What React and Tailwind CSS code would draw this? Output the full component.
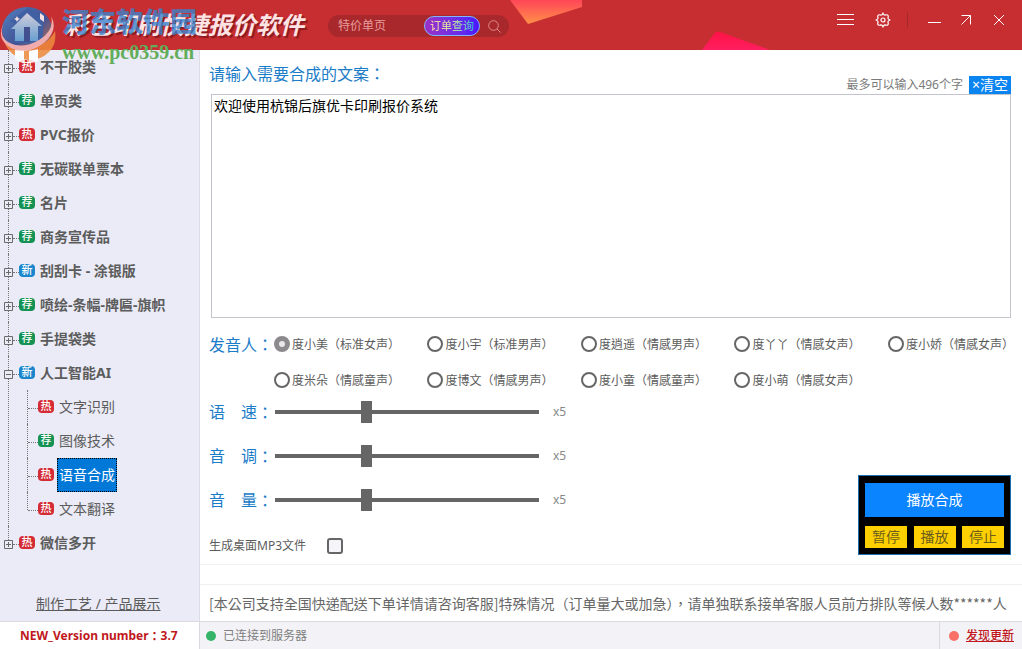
import clsx from 'clsx'
import { useState } from 'react'

const MENU = [
  { tag: 'hot', label: '不干胶类' },
  { tag: 'rec', label: '单页类' },
  { tag: 'hot', label: 'PVC报价' },
  { tag: 'rec', label: '无碳联单票本' },
  { tag: 'rec', label: '名片' },
  { tag: 'rec', label: '商务宣传品' },
  { tag: 'new', label: '刮刮卡 - 涂银版' },
  { tag: 'rec', label: '喷绘-条幅-牌匾-旗帜' },
  { tag: 'rec', label: '手提袋类' },
  {
    tag: 'new',
    label: '人工智能AI',
    children: [
      { tag: 'hot', label: '文字识别' },
      { tag: 'rec', label: '图像技术' },
      { tag: 'hot', label: '语音合成' },
      { tag: 'hot', label: '文本翻译' },
    ],
  },
  { tag: 'hot', label: '微信多开' },
]

const TAGS = {
  hot: { text: '热', className: 'bg-[#d42b35]' },
  rec: { text: '荐', className: 'bg-[#149253]' },
  new: { text: '新', className: 'bg-[#1b86cb]' },
}

const VOICES = [
  '度小美（标准女声）',
  '度小宇（标准男声）',
  '度逍遥（情感男声）',
  '度丫丫（情感女声）',
  '度小娇（情感女声）',
  '度米朵（情感童声）',
  '度博文（情感男声）',
  '度小童（情感童声）',
  '度小萌（情感女声）',
]

const SLIDERS = [
  { id: 'speed', chars: ['语', '速'] },
  { id: 'pitch', chars: ['音', '调'] },
  { id: 'volume', chars: ['音', '量'] },
]

export default function App() {
  return (
    <div className="relative flex flex-col min-h-screen bg-white text-[#5c5c5c] text-sm font-['Noto_Sans','Noto_Sans_CJK_SC',sans-serif]">
      <Header />
      <div className="flex flex-1">
        <Sidebar />
        <Main />
      </div>
      <Footer />
      <Watermark />
    </div>
  )
}

const Header = () => (
  <header className="relative flex items-center h-[50px] pl-16 pr-[17px] bg-[#c62e31]">
    <Decoration />
    <h1 className="relative w-[264px] whitespace-nowrap text-2xl font-bold italic text-[#fde3e3] [text-shadow:2px_2px_1px_#8c1a20]">
      彩色印刷快捷报价软件
    </h1>
    <div className="relative flex items-center h-[22px] mt-0.5 pl-2.5 pr-2 rounded-full bg-[#a8282b]">
      <input
        aria-label="搜索"
        defaultValue="特价单页"
        className="w-[86px] bg-transparent text-xs text-[#e79c9c] outline-none"
      />
      <button className="flex items-center justify-center w-14 h-5 rounded-full border border-[#7fb6ff] bg-linear-to-r from-[#9a2fc4] to-[#4a12ff]">
        <span className="whitespace-nowrap bg-linear-to-r from-[#ffd0b0] via-[#c8d8a0] to-[#20b8d0] bg-clip-text text-[11px] leading-4 font-medium text-transparent">
          订单查询
        </span>
      </button>
      <button aria-label="查询" className="ml-2">
        <svg
          viewBox="0 0 13 13"
          className="w-[13px] h-[13px] fill-none stroke-[#e08b8b]">
          <circle cx="5.5" cy="5.5" r="4.8" />
          <path d="M9 9l3.5 3.5" />
        </svg>
      </button>
    </div>
    <div className="relative flex items-center ml-auto mb-2.5 text-white">
      <button aria-label="菜单">
        <svg viewBox="0 0 18 12" className="w-[18px] h-3 stroke-current">
          <path d="M0 .5h17M0 5.5h17M0 10.5h17" />
        </svg>
      </button>
      <button aria-label="设置" className="ml-5">
        <svg
          viewBox="0 0 16 16"
          className="w-4 h-4 fill-none stroke-current stroke-[1.2]">
          <path d="M8 1.2Q9 3.2 10 3.1 12.2 2.3 12.8 3.2 13.7 3.8 12.9 6 12.8 7 14.8 8 12.8 9 12.9 10 13.7 12.2 12.8 12.8 12.2 13.7 10 12.9 9 12.8 8 14.8 7 12.8 6 12.9 3.8 13.7 3.2 12.8 2.3 12.2 3.1 10 3.2 9 1.2 8 3.2 7 3.1 6 2.3 3.8 3.2 3.2 3.8 2.3 6 3.1 7 3.2 8 1.2z" />
          <circle cx="8" cy="8" r="2" />
        </svg>
      </button>
      <div className="w-px h-4 ml-4 bg-[#a3282b]" />
      <button aria-label="最小化" className="ml-5">
        <svg viewBox="0 0 13 12" className="w-[13px] h-3 stroke-current">
          <path d="M0 8.5h13" />
        </svg>
      </button>
      <button aria-label="最大化" className="ml-5">
        <svg viewBox="0 0 10 10" className="size-2.5 fill-none stroke-current">
          <path d="M.5 .5h9v9M9.5 .5l-9 9" />
        </svg>
      </button>
      <button aria-label="关闭" className="ml-[22px]">
        <svg viewBox="0 0 12 12" className="size-3 fill-none stroke-current">
          <path d="M1 1l10 10M11 1L1 11" />
        </svg>
      </button>
    </div>
  </header>
)

const Decoration = () => (
  <svg
    viewBox="0 0 260 50"
    className="absolute top-0 left-[510px] w-[260px] h-[50px]">
    <defs>
      <linearGradient id="orange" x1="0" y1="0" x2="0" y2="1">
        <stop offset="0" stopColor="#ff4658" />
        <stop offset="1" stopColor="#ff9048" />
      </linearGradient>
      <linearGradient id="pink" x1="0" y1="0" x2="0" y2="1">
        <stop offset="0" stopColor="#ff1245" />
        <stop offset="1" stopColor="#ff1f60" />
      </linearGradient>
    </defs>
    <path d="M0 0h72v7L18 24z" fill="url(#orange)" />
    <path d="M192 50l12-16q2-3 6-2l50 18z" fill="url(#pink)" />
  </svg>
)

const Sidebar = () => {
  const [selected, setSelected] = useState('语音合成')

  return (
    <nav className="flex flex-col w-[200px] shrink-0 bg-[#eaebf6] border-r border-[#dcdce4]">
      <ul>
        {MENU.map((item, index) => (
          <li
            key={item.label}
            className={clsx(
              'relative before:absolute before:left-2 before:top-0 before:border-l before:border-dotted before:border-[#777]',
              index === MENU.length - 1 ? 'before:h-4' : 'before:h-full'
            )}>
            <div className="relative flex items-center h-[34px] pl-1">
              <Toggle open={!!item.children} />
              <span className="w-1.5 mt-0.5 border-t border-dotted border-[#777]" />
              <Tag type={item.tag} />
              <button
                onClick={() => setSelected(item.label)}
                className="ml-[5px] font-bold whitespace-nowrap">
                {item.label}
              </button>
            </div>
            {item.children && (
              <ul>
                {item.children.map((child, i) => (
                  <li
                    key={child.label}
                    className={clsx(
                      'relative flex items-center h-[34px] pl-7 before:absolute before:left-[27px] before:top-0 before:border-l before:border-dotted before:border-[#777]',
                      i === item.children.length - 1
                        ? 'before:h-[18px]'
                        : 'before:h-full'
                    )}>
                    <span className="w-2.5 mt-0.5 border-t border-dotted border-[#777]" />
                    <Tag type={child.tag} />
                    <button
                      onClick={() => setSelected(child.label)}
                      className={clsx(
                        'h-full ml-[3px] px-px border border-dotted whitespace-nowrap',
                        selected === child.label
                          ? 'bg-[#0078d7] border-black text-white'
                          : 'border-transparent'
                      )}>
                      {child.label}
                    </button>
                  </li>
                ))}
              </ul>
            )}
          </li>
        ))}
      </ul>
      <a href="#gallery" className="mt-auto mb-[7px] ml-9 underline">
        制作工艺 / 产品展示
      </a>
    </nav>
  )
}

const Toggle = ({ open }) => (
  <button aria-label={open ? '收起' : '展开'} className="mt-0.5">
    <svg
      viewBox="0 0 9 9"
      className="size-[9px] fill-[#eaebf6] stroke-[#6a6a6a]">
      <path d="M.5 .5h8v8h-8z" />
      <path d={open ? 'M2 4.5h5' : 'M2 4.5h5M4.5 2v5'} />
    </svg>
  </button>
)

const Tag = ({ type }) => (
  <span
    className={clsx(
      'flex items-center justify-center w-4 h-[13px] mb-0.5 rounded text-[11px] leading-3 font-medium text-white',
      TAGS[type].className
    )}>
    {TAGS[type].text}
  </span>
)

// The TC face centres full-width punctuation in its square
const Colon = () => <span className="font-['Noto_Sans_CJK_TC',sans-serif]">：</span>

const Main = () => {
  const [text, setText] = useState('欢迎使用杭锦后旗优卡印刷报价系统')

  return (
    <main className="flex flex-col flex-1 min-w-0">
      <div className="flex items-end justify-between h-11 pl-[9px] pr-[11px]">
        <label htmlFor="copy" className="mb-2 text-base text-[#1b7cc8]">
          请输入需要合成的文案
          <Colon />
        </label>
        <div className="flex items-center">
          <span className="mr-1.5 text-xs text-[#7a7a7a]">
            最多可以输入496个字
          </span>
          <button
            onClick={() => setText('')}
            className="h-[18px] px-[3px] bg-[#0a84f0] leading-[18px] text-white">
            ×清空
          </button>
        </div>
      </div>
      <div className="flex flex-1 pl-[11px] pr-[11px]">
        <textarea
          id="copy"
          value={text}
          onChange={(event) => setText(event.target.value)}
          className="flex-1 min-h-40 px-0.5 pt-px border border-[#c3c3cb] bg-white text-sm text-black resize-none outline-none"
        />
      </div>
      <Voices />
      <div className="flex items-end justify-between pl-[9px] pr-[11px]">
        <div>
          {SLIDERS.map((slider) => (
            <Slider key={slider.id} {...slider} />
          ))}
          <div className="flex items-center h-[42px] pt-1.5">
            <label htmlFor="mp3" className="w-[118px] text-xs">
              生成桌面MP3文件
            </label>
            <input
              id="mp3"
              type="checkbox"
              className="appearance-none size-4 border-2 border-[#666] rounded-[3px] bg-[#f5f4f8] checked:bg-[#666]"
            />
          </div>
        </div>
        <Player />
      </div>
      <div className="h-[21px] border-y border-[#f0f0f2]" />
      <p className="h-9 pl-[9px] leading-9 text-[#666] whitespace-nowrap overflow-hidden font-['Noto_Sans_CJK_TC',sans-serif]">
        [本公司支持全国快递配送下单详情请咨询客服]特殊情况（订单量大或加急），请单独联系接单客服人员前方排队等候人数******人
      </p>
    </main>
  )
}

const Voices = () => (
  <div
    role="radiogroup"
    aria-labelledby="voices"
    className="flex pt-4 pl-[9px] pr-2">
    <span
      id="voices"
      className="w-[65px] shrink-0 text-base leading-5 text-[#1b7cc8] whitespace-nowrap">
      发音人
      <Colon />
    </span>
    <div className="grid flex-1 grid-cols-[repeat(4,1fr)_auto] gap-y-4">
      {VOICES.map((voice, index) => (
        <label
          key={voice}
          className="flex items-center gap-0.5 h-5 text-xs whitespace-nowrap font-['Noto_Sans_CJK_TC',sans-serif]">
          <input
            type="radio"
            name="voice"
            defaultChecked={index === 0}
            className="appearance-none size-4 shrink-0 border-2 border-[#666] rounded-full checked:border-[5px] checked:border-[#8c8a8c] checked:bg-[#e8e8e8]"
          />
          {voice}
        </label>
      ))}
    </div>
  </div>
)

const Slider = ({ id, chars }) => (
  <div className="flex items-center h-11">
    <label htmlFor={id} className="flex w-[66px] text-base text-[#1b7cc8]">
      <span className="flex justify-between w-12">
        {chars.map((char) => (
          <span key={char}>{char}</span>
        ))}
      </span>
      <Colon />
    </label>
    <input
      id={id}
      type="range"
      defaultValue={34}
      className="appearance-none w-66 h-[22px] bg-transparent [&::-webkit-slider-runnable-track]:h-1 [&::-webkit-slider-runnable-track]:bg-[#666] [&::-webkit-slider-thumb]:appearance-none [&::-webkit-slider-thumb]:w-[11px] [&::-webkit-slider-thumb]:h-[22px] [&::-webkit-slider-thumb]:-mt-[9px] [&::-webkit-slider-thumb]:bg-[#666]"
    />
    <span className="ml-3.5 text-xs text-[#888]">x5</span>
  </div>
)

const Player = () => (
  <div className="flex flex-col gap-[9px] w-[153px] h-20 mb-[9px] p-1.5 pt-[7px] border border-[#1d6fb0] bg-black">
    <button className="h-[34px] bg-[#0a84ff] text-white">播放合成</button>
    <div className="flex justify-between">
      {['暂停', '播放', '停止'].map((action) => (
        <button
          key={action}
          className="w-[42px] h-[22px] bg-[#ffd000] leading-[22px] text-[#6b5d1c]">
          {action}
        </button>
      ))}
    </div>
  </div>
)

const Footer = () => (
  <footer className="flex h-7 border-t border-[#dcdae0] text-xs">
    <div className="flex items-center w-[200px] pl-5 border-r border-[#dcdae0] bg-white font-bold text-[#c0181c] whitespace-nowrap">
      NEW_Version number
      <Colon />
      3.7
    </div>
    <div className="flex items-center flex-1 gap-[7px] pl-1.5 bg-[#f3f2f7] text-[#808080]">
      <span className="size-2.5 rounded-full bg-[#35b368]" />
      已连接到服务器
    </div>
    <div className="flex items-center gap-[7px] pl-[9px] pr-2 border-l border-[#dcdae0] bg-[#f3f2f7]">
      <span className="size-2.5 rounded-full bg-[#f87066]" />
      <a href="#update" className="font-medium text-[#c0181c] underline">
        发现更新
      </a>
    </div>
  </footer>
)

const Watermark = () => (
  <div className="absolute top-1 left-0 flex pointer-events-none">
    <svg viewBox="0 0 60 60" className="w-[60px] h-[60px] opacity-85">
      <defs>
        <linearGradient id="ring" x1="0" y1="0" x2="1" y2="1">
          <stop offset="0" stopColor="#3f8fd8" />
          <stop offset=".55" stopColor="#2b5aa8" />
          <stop offset="1" stopColor="#e8823a" />
        </linearGradient>
        <linearGradient id="house" x1="0" y1="0" x2="0" y2="1">
          <stop offset="0" stopColor="#d4e8fa" />
          <stop offset="1" stopColor="#58b4ec" />
        </linearGradient>
      </defs>
      <ellipse cx="27" cy="26" rx="25" ry="23" fill="url(#ring)" />
      <path d="M3 35q9 11 27 9 18-3 25-17 2 13-6 21-8 8-20 8-20-2-26-21z" fill="#ee8a3c" />
      <path d="M29 3l16 12-2 3v18l-14 4-15-2V19l-4-2z" fill="#2a69b8" />
      <path d="M27 9l15 13h-4v15h-8V23h-6v14h-9V25h-4z" fill="url(#house)" />
      <path d="M24 23h6v15h-6z" fill="#2c57a0" />
      <path d="M40 9l4 3v6l-4-3zM17 12l1 2 2 1-2 1-1 2-1-2-2-1 2-1z" fill="#ffffff" />
      <path d="M7 14Q-4 30 8 38q14 8 31-2 16-10 12-24 8 14-7 27-18 13-33 5Q-7 34 7 14z" fill="#f6c3c6" />
      <path d="M15 46l9 1v12q-5-1-9-4zM29 47l9-2v12q-4 2-9 2z" fill="#ffffff" />
    </svg>
    <div className="flex flex-col pl-0.5 whitespace-nowrap">
      <span className="text-[27px] leading-9 font-black text-[#3784cf]/80">
        河东软件园
      </span>
      <span className="text-xl leading-6 font-bold text-[#62ad5a] font-['Liberation_Serif',serif]">
        www.pc0359.cn
      </span>
    </div>
  </div>
)
